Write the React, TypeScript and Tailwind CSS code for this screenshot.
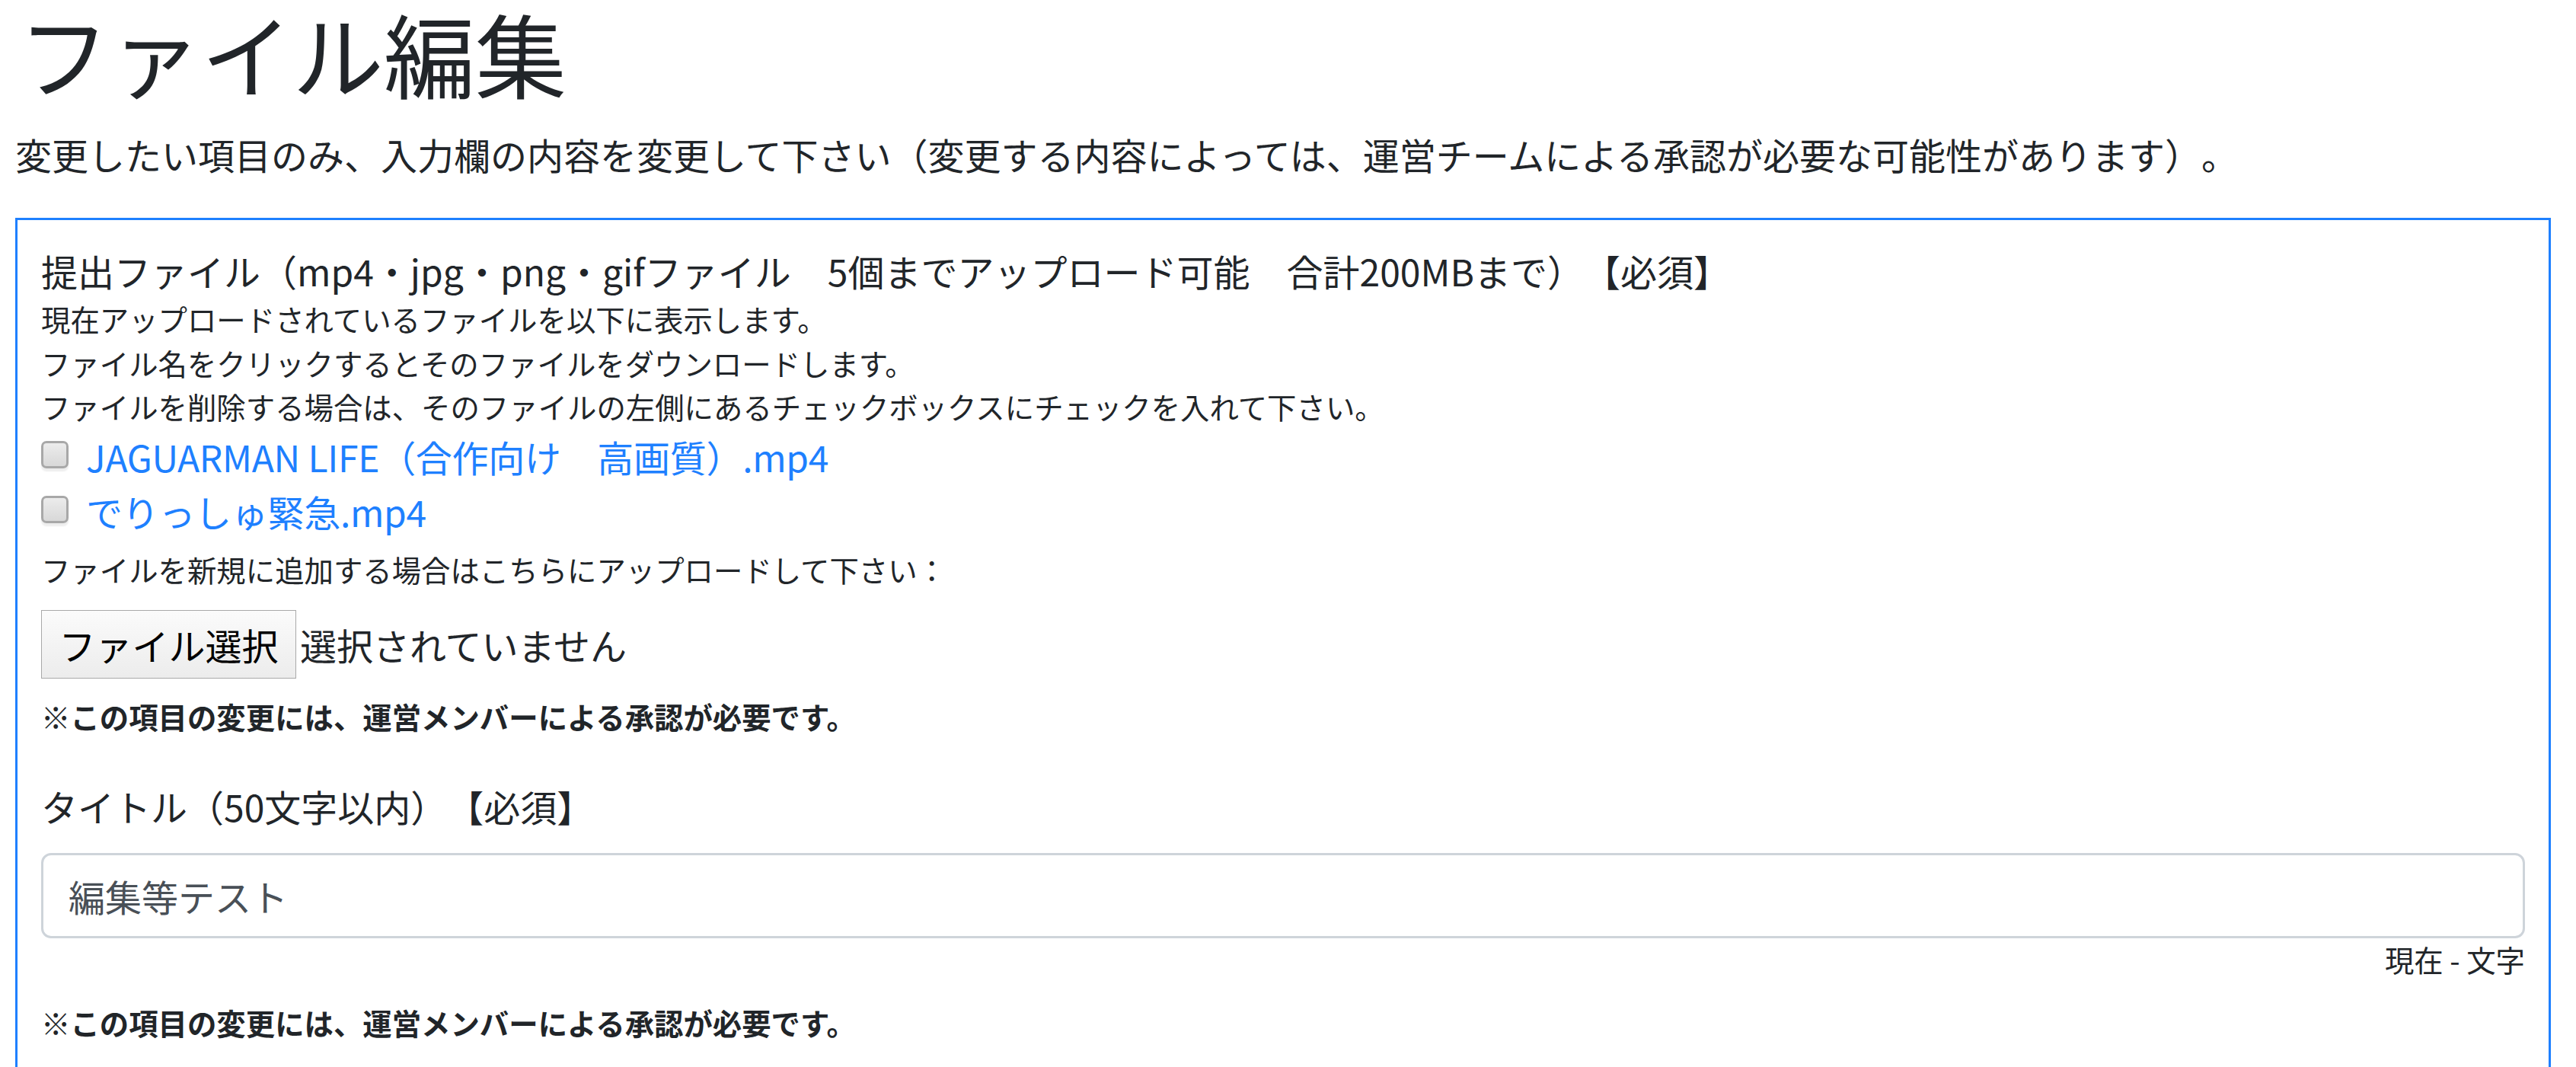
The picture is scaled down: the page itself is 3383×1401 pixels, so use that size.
import React from "react";

const Checkbox = () => (
  <span className="mt-[16px] block w-[36px] h-[36px] shrink-0 rounded-[7px] border-[3px] border-[#a8a8a8] bg-linear-to-b from-[#ececec] to-[#d8d8d8] shadow-[0_4px_2px_rgba(0,0,0,0.07)]" />
);

const Note = ({ className = "" }: { className?: string }) => (
  <p className={"text-[38.4px] leading-[57.6px] font-bold text-[#212529] " + className}>
    ※この項目の変更には、運営メンバーによる承認が必要です。
  </p>
);

export default function App() {
  return (
    <div className="min-h-screen bg-white pl-[20px] pt-[4px] font-['Noto_Sans_CJK_JP','Noto_Sans',sans-serif] text-[#212529] overflow-hidden [text-spacing-trim:space-all]">
      <h1 className="ml-[4px] text-[120px] leading-[130px] font-normal">ファイル編集</h1>
      <p className="mt-[32px] text-[48px] leading-[72px] whitespace-nowrap">
        変更したい項目のみ、入力欄の内容を変更して下さい（変更する内容によっては、運営チームによる承認が必要な可能性があります）。
      </p>
      <div className="mt-[48px] w-[3330px] border-[3px] border-[#1e80ff] px-[31px] pt-[31px] pb-[80px]">
        <div className="text-[48px] leading-[70px] whitespace-nowrap">
          提出ファイル（mp4・jpg・png・gifファイル　5個までアップロード可能　合計200MBまで）【必須】
        </div>
        <div className="text-[38.4px] leading-[57.6px]">
          <p>現在アップロードされているファイルを以下に表示します。</p>
          <p>ファイル名をクリックするとそのファイルをダウンロードします。</p>
          <p>ファイルを削除する場合は、そのファイルの左側にあるチェックボックスにチェックを入れて下さい。</p>
        </div>
        <div className="flex items-start h-[72px]">
          <Checkbox />
          <a className="ml-[23px] text-[48px] leading-[72px] text-[#1e80ff] whitespace-nowrap tracking-[-0.3px]">
            JAGUARMAN LIFE（合作向け　高画質）.mp4
          </a>
        </div>
        <div className="flex items-start h-[72px]">
          <Checkbox />
          <a className="ml-[23px] text-[48px] leading-[72px] text-[#1e80ff] whitespace-nowrap tracking-[-0.3px]">
            でりっしゅ緊急.mp4
          </a>
        </div>
        <p className="mt-[12px] text-[38.4px] leading-[57.6px]">
          ファイルを新規に追加する場合はこちらにアップロードして下さい：
        </p>
        <div className="mt-[25px] flex items-center h-[90px]">
          <div className="w-[335px] h-[90px] flex items-center justify-center border border-[#a9a9a9] bg-linear-to-b from-[#fbfbfb] to-[#ececec] text-[48px] text-black">
            ファイル選択
          </div>
          <span className="ml-[5px] text-[48px] text-[#212529]">選択されていません</span>
        </div>
        <Note className="mt-[21px]" />
        <div className="mt-[52px] text-[48px] leading-[72px]">タイトル（50文字以内）【必須】</div>
        <input
          type="text"
          defaultValue="編集等テスト"
          className="mt-[26px] block w-full h-[112px] border-[3px] border-[#ced4da] rounded-[13px] px-[33px] text-[48px] text-[#495057] outline-none bg-white"
        />
        <div className="mt-[-1px] text-right text-[38.4px] leading-[57.6px]">現在 - 文字</div>
        <Note className="mt-[25px]" />
      </div>
    </div>
  );
}
